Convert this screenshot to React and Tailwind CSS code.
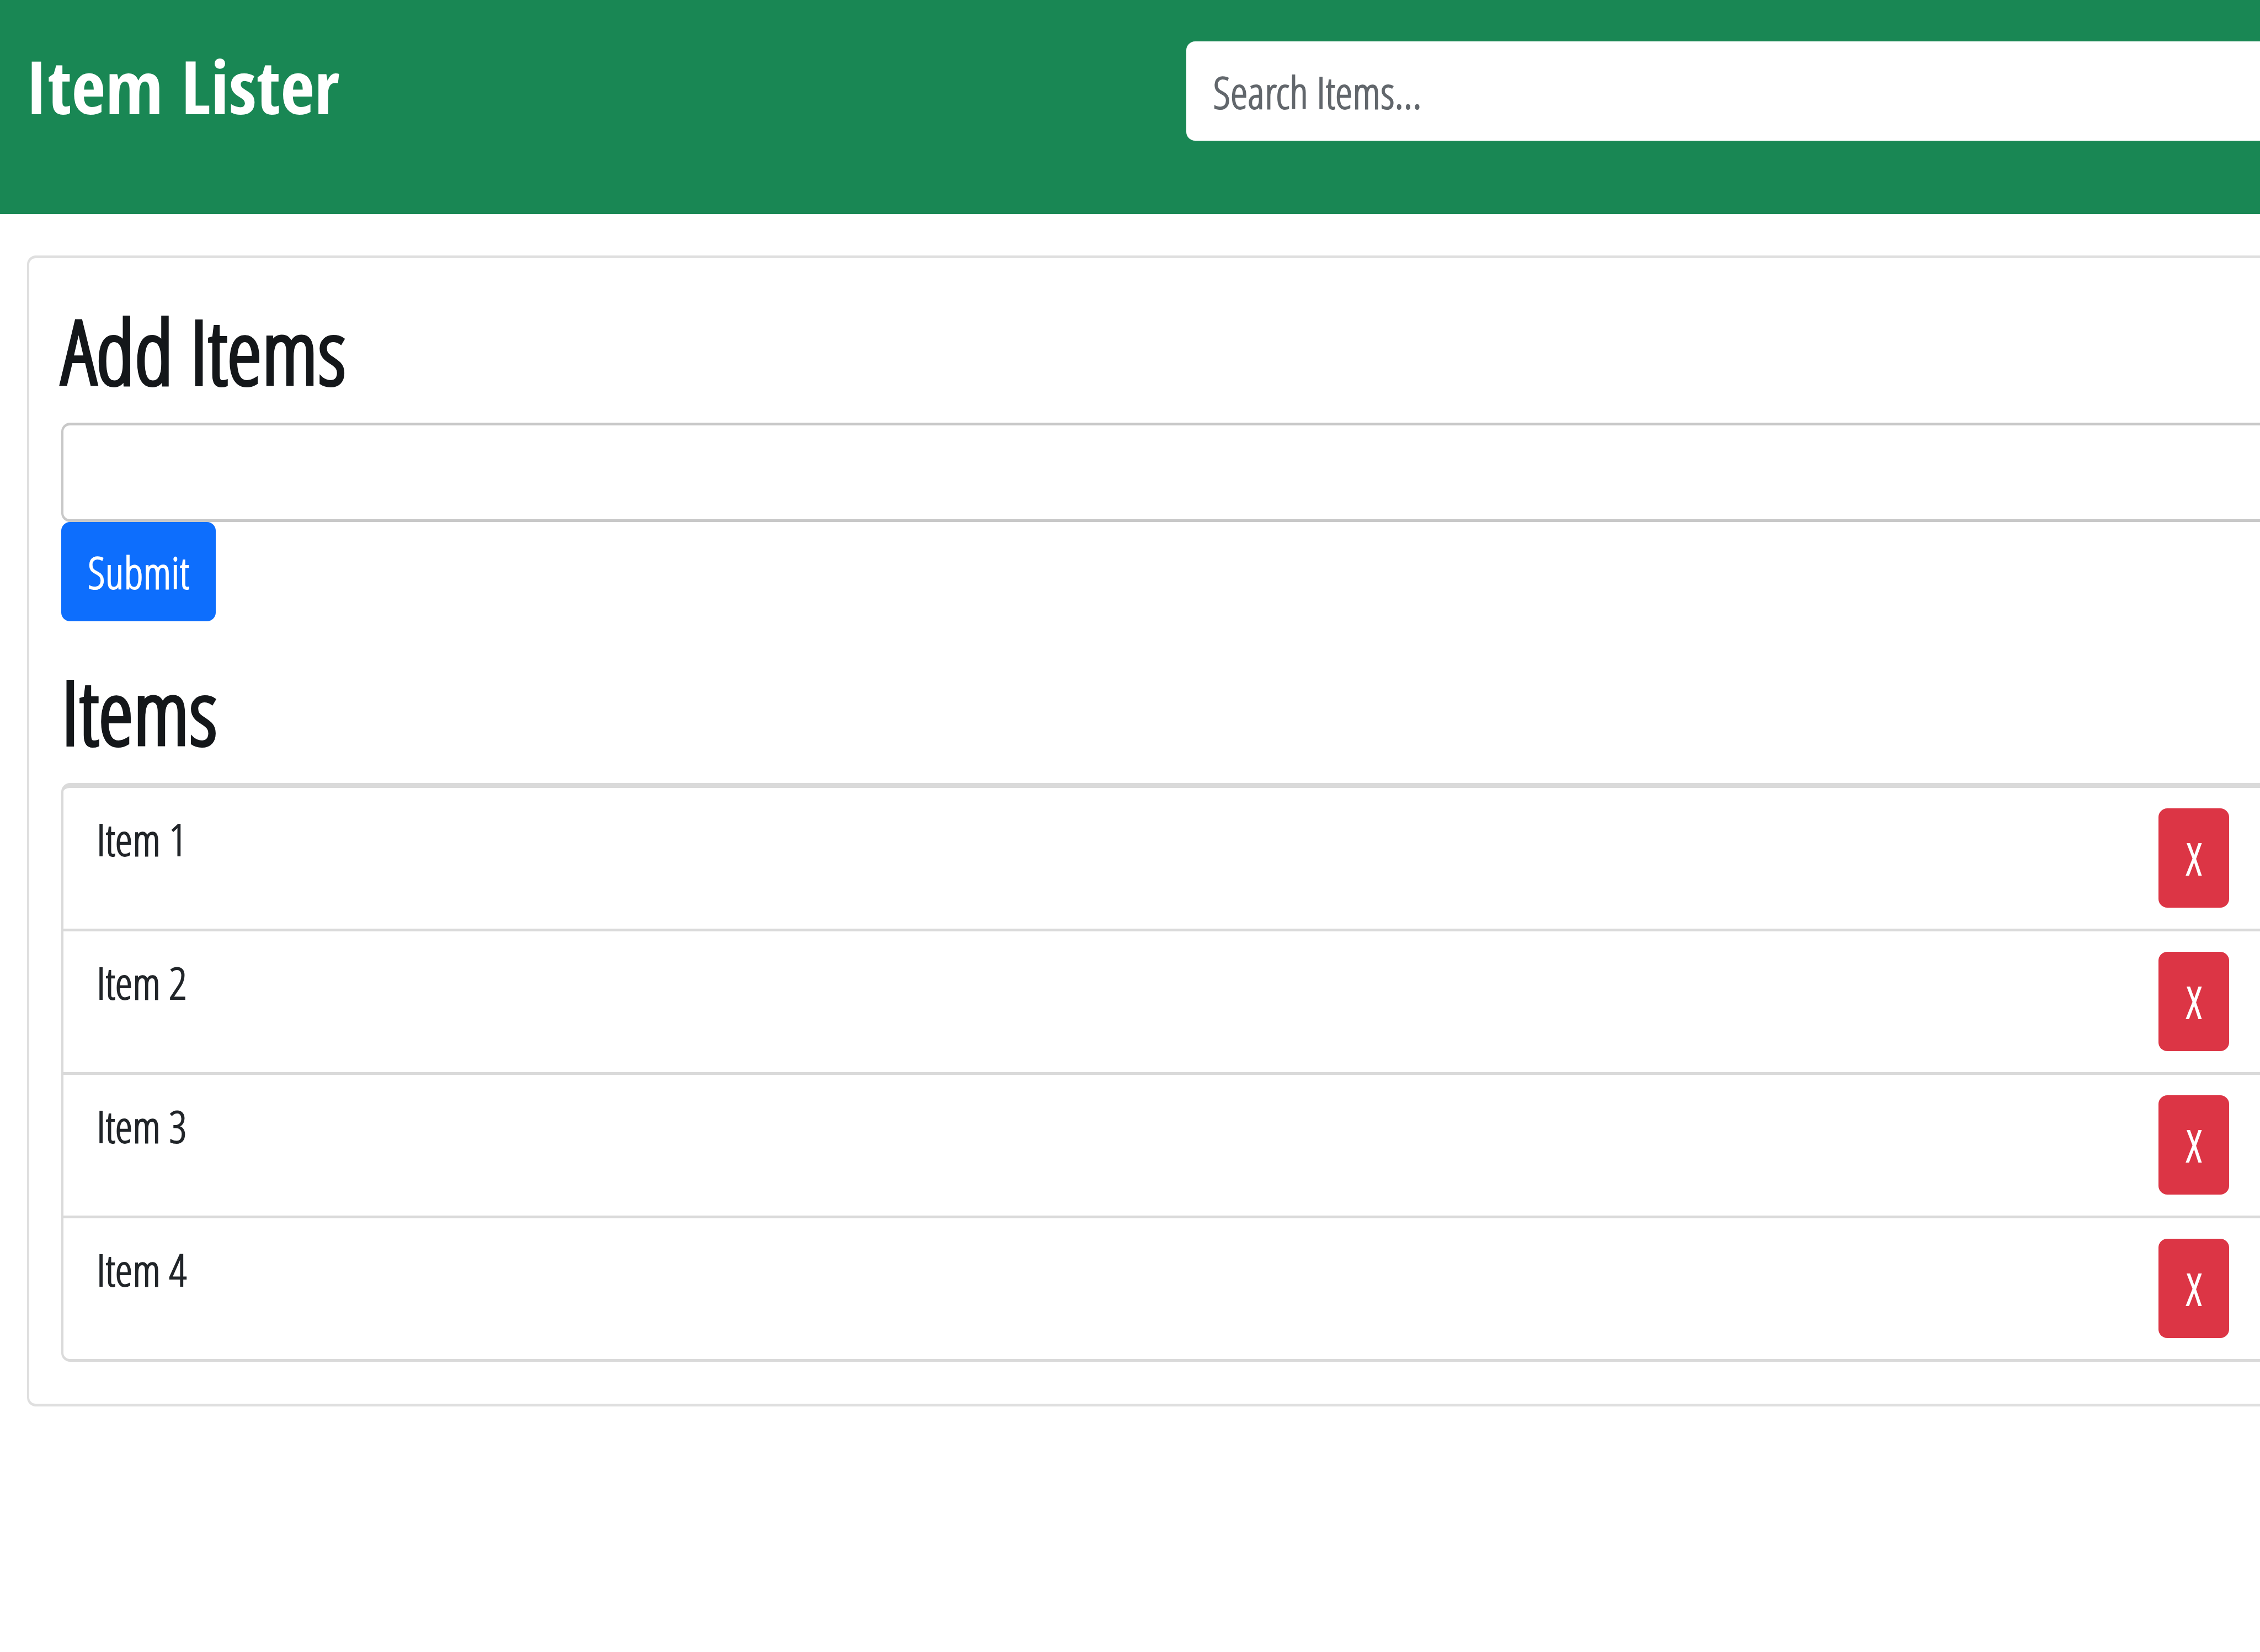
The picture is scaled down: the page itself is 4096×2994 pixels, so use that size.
const items = ["Item 1", "Item 2", "Item 3", "Item 4"];

const control =
  "block h-[180px] w-full rounded-l-[16px] bg-white px-[48px] text-[80px] text-[#212529] placeholder:text-[#62676c] placeholder:opacity-100";

const heading = "mb-[69px] text-[160px] leading-[124px] font-bold text-[#14171a] [-webkit-text-stroke-width:1px]";

export default function App() {
  return (
    <div
      className="min-h-screen bg-white text-[80px] leading-[110px] text-[#212529] [-webkit-text-stroke-width:2px]"
      style={{ fontFamily: '"Open Sans Condensed Light", "Roboto Condensed", sans-serif' }}
    >
      <header className="flex items-start bg-[#198754] pt-[75px] pb-[133px] text-white">
        <h1
          className="w-[52.5%] pl-[46px] text-[134px] leading-[160px] font-bold [-webkit-text-stroke-width:0px]"
          style={{ fontFamily: '"Open Sans Condensed", "Roboto Condensed", sans-serif' }}
        >
          Item Lister
        </h1>
        <input type="text" aria-label="Search items" placeholder="Search Items..." className={`${control} flex-1`} />
      </header>

      <main className="mt-[75px] ml-[49px] rounded-l-[16px] border-y-[5px] border-l-[4px] border-[#dfdfdf] pt-[105px] pb-[76px] pl-[58px]">
        <h2 className={heading}>Add Items</h2>
        <form onSubmit={(e) => e.preventDefault()}>
          <input type="text" aria-label="New item" className={`${control} border-y-[5px] border-l-[4px] border-[#c8c8c8]`} />
          <button type="submit" className="block h-[180px] rounded-[16px] bg-[#0d6efd] px-[48px] text-white">
            Submit
          </button>
        </form>

        <h2 className={`${heading} mt-[100px]`}>Items</h2>
        <ul className="rounded-l-[16px] border-t-[9px] border-b-[5px] border-l-[4px] border-[#dadada]">
          {items.map((item) => (
            <li
              key={item}
              className="flex items-start justify-between border-b-[5px] border-[#dadada] pt-[37px] pr-[56px] pb-[38px] pl-[60px] last:border-b-0"
            >
              <span>{item}</span>
              <button type="button" aria-label={`Delete ${item}`} className="h-[180px] w-[128px] rounded-[16px] bg-[#dc3545] text-white">
                X
              </button>
            </li>
          ))}
        </ul>
      </main>
    </div>
  );
}
